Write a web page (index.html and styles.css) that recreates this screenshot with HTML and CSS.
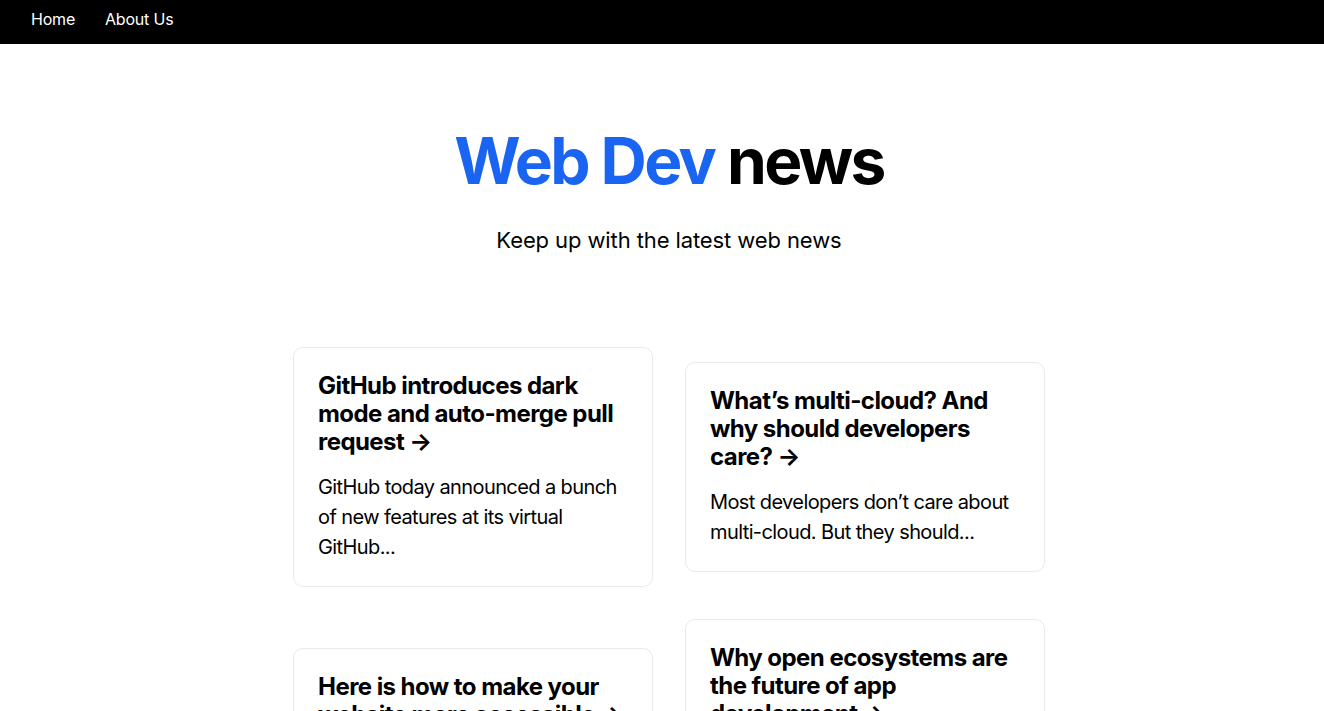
FILE: index.html
```html
<!DOCTYPE html>
<html lang="en">
<head>
<meta charset="utf-8">
<title>Web Dev news</title>
<link rel="stylesheet" href="styles.css">
</head>
<body>
<nav class="nav">
  <a class="nav-link" href="#">Home</a>
  <a class="nav-link" href="#">About Us</a>
</nav>
<main class="main">
  <h1 class="title"><a class="title-accent" href="#">Web Dev</a> news</h1>
  <p class="description">Keep up with the latest web news</p>
  <div class="grid">
    <a class="card" href="#">
      <h3 class="card-title">GitHub introduces dark mode and auto-merge pull request &rarr;</h3>
      <p class="card-text">GitHub today announced a bunch of new features at its virtual GitHub...</p>
    </a>
    <a class="card" href="#">
      <h3 class="card-title">What’s multi-cloud? And why should developers care? &rarr;</h3>
      <p class="card-text">Most developers don’t care about multi-cloud. But they should...</p>
    </a>
    <a class="card" href="#">
      <h3 class="card-title">Here is how to make your website more accessible &rarr;</h3>
      <p class="card-text">Accessibility is an important part of building for the web...</p>
    </a>
    <a class="card" href="#">
      <h3 class="card-title">Why open ecosystems are the future of app development &rarr;</h3>
      <p class="card-text">Open ecosystems give developers more freedom and users more choice in the apps...</p>
    </a>
  </div>
</main>
</body>
</html>
```
FILE: styles.css
```css
* { box-sizing: border-box; }
html, body {
  margin: 0;
  padding: 0;
  font-family: Inter, "Noto Sans", "Liberation Sans", sans-serif;
  color: #000;
  background: #fff;
}
a { color: inherit; text-decoration: none; }

.nav {
  display: flex;
  background: #000;
  height: 44px;
  padding: 7px 16px 13px;
}
.nav-link {
  color: #fff;
  font-size: 16px;
  line-height: 24px;
  letter-spacing: -0.2px;
  padding: 0 15px;
}

.main {
  display: flex;
  flex-direction: column;
  align-items: center;
  padding: 80px 0 80px 14px;
}
.title {
  margin: 0;
  font-size: 64px;
  line-height: 1.15;
  font-weight: 700;
  letter-spacing: -2.6px;
  text-align: center;
}
.title-accent { color: #1a64f2; }
.description {
  margin: 26px 0 25px;
  font-size: 22px;
  line-height: 1.5;
  letter-spacing: -0.1px;
  text-align: center;
}
.grid {
  display: flex;
  flex-wrap: wrap;
  align-items: center;
  justify-content: center;
  width: 800px;
  margin-top: 49px;
}
.card {
  flex-basis: 45%;
  margin: 16px;
  padding: 24px;
  border: 1px solid #eaeaea;
  border-radius: 10px;
  text-align: left;
}
.card-title {
  margin: 0 0 16px;
  font-size: 24px;
  line-height: 28px;
  font-weight: 700;
  letter-spacing: -0.55px;
}
.card-text {
  margin: 0;
  font-size: 20px;
  line-height: 1.5;
  letter-spacing: -0.6px;
}
```
